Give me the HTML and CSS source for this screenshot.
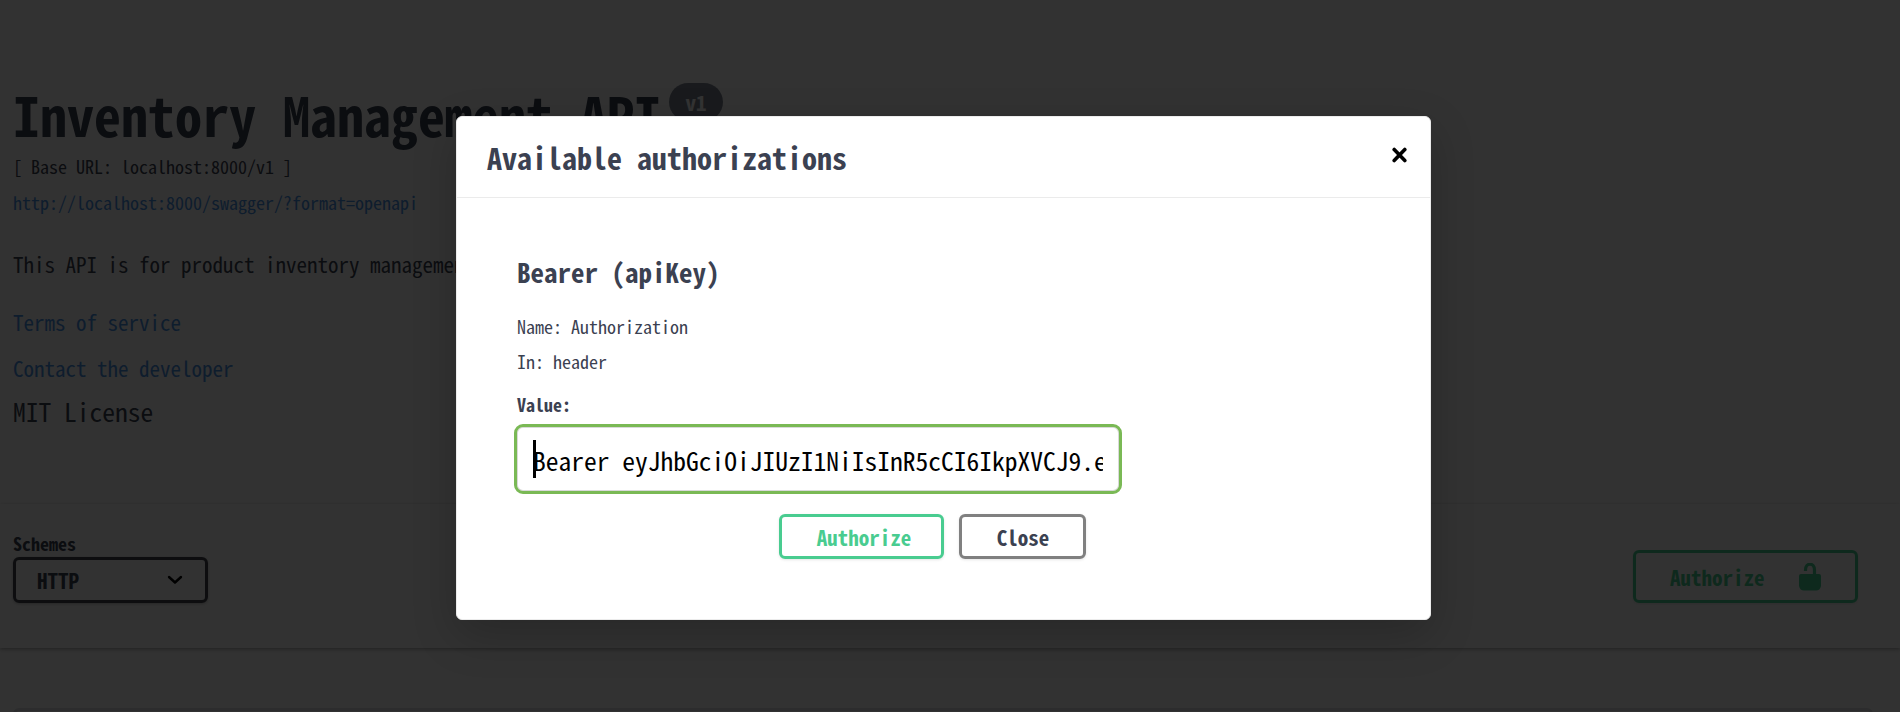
FILE: index.html
```html
<!DOCTYPE html>
<html lang="en"><head><meta charset="utf-8"><title>Inventory Management API</title>
<link rel="stylesheet" href="styles.css"></head>
<body>
<main class="page">
  <section class="info">
    <h1 class="title"><span class="mono">Inventory Management API</span><span class="version"><b class="mono">v1</b></span></h1>
    <p class="base mono">[ Base URL: localhost:8000/v1 ]</p>
    <a class="spec link mono">http://localhost:8000/swagger/?format=openapi</a>
    <p class="desc mono">This API is for product inventory management.</p>
    <a class="terms link mono">Terms of service</a>
    <a class="contact link mono">Contact the developer</a>
    <p class="license mono">MIT License</p>
  </section>
  <section class="schemes">
    <div>
      <label class="label"><span class="mono">Schemes</span></label>
      <div class="select"><span class="mono">HTTP</span>
        <svg width="16" height="10" viewBox="0 0 16 10"><path d="M2 2l6 5.500 6-5.500" fill="none" stroke="#000" stroke-width="2.400" stroke-linecap="round" stroke-linejoin="round"/></svg></div>
    </div>
    <div class="btn auth-open"><span class="mono">Authorize</span>
      <svg width="22" height="28" viewBox="0 0 22 28"><path d="M6.500 8V7C6.500 -.8 15.500 -.8 15.500 7V12" fill="none" stroke="#49cc90" stroke-width="3.200"/><path d="M2 11H20Q22 11 22 13V23Q21 27.500 17 27.500H5Q1 27.500 0 23V13Q0 11 2 11Z" fill="#49cc90"/></svg></div>
  </section>
  <section class="models"></section>
</main>
<div class="backdrop">
  <div class="modal">
    <header class="head"><h3 class="mono">Available authorizations</h3>
      <svg width="16" height="16" viewBox="0 0 16 16"><path d="M2.200 2.500l10.600 11M12.800 2.500l-10.600 11" stroke="#000" stroke-width="3.600" stroke-linecap="round"/></svg></header>
    <div class="body">
      <h4 class="mono">Bearer (apiKey)</h4>
      <p class="name mono">Name: Authorization</p>
      <p class="in mono">In: header</p>
      <p class="value mono">Value:</p>
      <div class="field"><i class="caret"></i><div class="clip"><span class="mono">Bearer eyJhbGciOiJIUzI1NiIsInR5cCI6IkpXVCJ9.e</span></div></div>
      <div class="actions"><div class="btn"><span class="mono">Authorize</span></div><div class="btn close"><span class="mono">Close</span></div></div>
    </div>
  </div>
</div>
</body></html>
```
FILE: styles.css
```css
* { box-sizing: border-box; margin: 0; padding: 0; }
body { width: 1900px; height: 712px; overflow: hidden; background: #fafafa; color: #3b4151; font-family: "Noto Sans Mono CJK JP", "Liberation Mono", monospace; }
.mono { display: block; width: max-content; white-space: pre; }
.page { display: flex; flex-direction: column; height: 712px; overflow: hidden; }
.page > section { flex-shrink: 0; }
.info { display: flex; flex-direction: column; height: 504px; padding: 83px 0 0 13px; }
.title { display: flex; gap: 8px; height: 65px; font-size: 54px; line-height: 62px; }
.version { display: flex; justify-content: center; width: 54px; height: 38px; border-radius: 19px; background: #7d8492; color: #fff; font-size: 21px; line-height: 39px; }
.base { font-size: 18px; line-height: 36px; }
.spec { font-size: 18px; line-height: 36px; }
.link { color: #4990e2; }
.desc { font-size: 21px; line-height: 30px; margin-top: 29px; }
.terms { font-size: 21px; line-height: 30px; margin-top: 28px; }
.contact { font-size: 21px; line-height: 30px; margin-top: 16px; }
.license { font-size: 25.5px; line-height: 30px; margin-top: 13px; }
.schemes { display: flex; justify-content: space-between; height: 144px; padding: 28px 42px 0 13px; box-shadow: 0 1px 3px rgba(0,0,0,.2), 0 2px 5px rgba(0,0,0,.15); }
.label { display: block; font-size: 18px; font-weight: 700; line-height: 23px; height: 25px; }
.select { display: flex; align-items: center; justify-content: space-between; width: 195px; height: 46px; padding: 0 22px 0 21px; border: 3px solid #41444e; border-radius: 6px; box-shadow: 0 1px 3px rgba(0,0,0,.25); font-size: 21px; font-weight: 700; }
.btn { display: flex; align-items: center; justify-content: center; width: 165px; height: 45px; padding-left: 5px; border: 3px solid #49cc90; border-radius: 6px; color: #49cc90; box-shadow: 0 1px 3px rgba(0,0,0,.1); font-size: 21px; font-weight: 700; }
.auth-open { justify-content: space-between; width: 225px; height: 53px; margin-top: 18px; padding: 0 34px; }
.models { height: 20px; margin: 60px 27px 0 13px; border: 3px solid #dadce0; border-radius: 6px; }
.backdrop { position: absolute; inset: 0; background: rgba(0,0,0,.8); padding: 116px 0 0 456px; }
.modal { width: 975px; height: 504px; background: #fff; border: 1px solid #ebebeb; border-radius: 6px; box-shadow: 0 15px 45px rgba(0,0,0,.2); }
.head { display: flex; justify-content: space-between; height: 81px; padding: 0 22px 0 30px; border-bottom: 1px solid #ebebeb; }
.head h3 { font-size: 30px; line-height: 80px; }
.head svg { margin-top: 30px; }
.body { padding: 54px 0 0 60px; }
h4 { font-size: 27px; line-height: 40px; }
.name { font-size: 18px; line-height: 30px; margin-top: 19px; }
.in { font-size: 18px; line-height: 30px; margin-top: 5px; }
.value { font-size: 18px; line-height: 30px; margin-top: 13px; font-weight: 700; }
.field { position: relative; width: 608px; height: 70px; margin: 5px 0 0 -3px; padding: 0 15px 0 16px; border: 3px solid #7ab955; border-radius: 9px; box-shadow: inset 0 0 0 1px #d9d9d9; font-size: 25.5px; line-height: 66px; color: #000; }
.clip { overflow: hidden; height: 64px; width: 570px; }
.caret { position: absolute; left: 16px; top: 13px; width: 3px; height: 38px; background: #000; }
.actions { display: flex; gap: 15px; margin: 20px 0 0 262px; }
.close { width: 127px; padding-left: 1px; border-color: #808080; color: #3b4151; }
```
